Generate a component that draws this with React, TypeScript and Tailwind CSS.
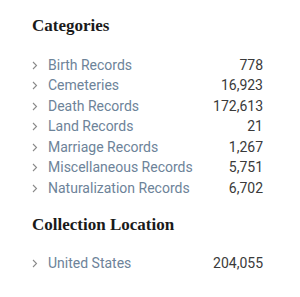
const categories = [
  { name: 'Birth Records', count: '778' },
  { name: 'Cemeteries', count: '16,923' },
  { name: 'Death Records', count: '172,613' },
  { name: 'Land Records', count: '21' },
  { name: 'Marriage Records', count: '1,267' },
  { name: 'Miscellaneous Records', count: '5,751' },
  { name: 'Naturalization Records', count: '6,702' },
];

const locations = [{ name: 'United States', count: '204,055' }];

function Chevron() {
  return (
    <svg width="6" height="9" viewBox="0 0 6 9" className="shrink-0">
      <path d="M1 1l3.5 3.5L1 8" fill="none" stroke="#8a8a8a" strokeWidth="1.1" />
    </svg>
  );
}

function Row({ name, count }: { name: string; count: string }) {
  return (
    <li className="flex h-[20.5px] items-center">
      <Chevron />
      <span className="ml-[10px] flex-1 text-[#6d8399]">{name}</span>
      <span className="text-[#3a3a3a]">{count}</span>
    </li>
  );
}

export default function App() {
  return (
    <div className="h-[297px] w-[300px] bg-white pl-[32px] pr-[37px] font-['Roboto',sans-serif] text-[14px]">
      <h2 className="pt-[15px] font-['Liberation_Serif',serif] text-[17px] font-bold leading-[22px] text-[#1a1a1a]">
        Categories
      </h2>
      <ul className="mt-[18px]">
        {categories.map((c) => (
          <Row key={c.name} {...c} />
        ))}
      </ul>
      <h2 className="mt-[15px] font-['Liberation_Serif',serif] text-[17px] font-bold leading-[22px] text-[#1a1a1a]">
        Collection Location
      </h2>
      <ul className="mt-[18px]">
        {locations.map((c) => (
          <Row key={c.name} {...c} />
        ))}
      </ul>
    </div>
  );
}
